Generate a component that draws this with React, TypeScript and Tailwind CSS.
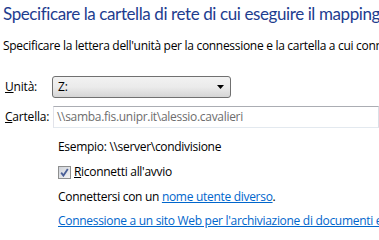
import React from 'react';

const font = { fontFamily: '"Open Sans", "Noto Sans", sans-serif' };

export default function App(): JSX.Element {
  return (
    <div className="h-[240px] w-[379px] overflow-hidden bg-white text-black" style={font}>
      <h1 className="whitespace-nowrap pl-[3px] pt-[3px] font-['Lato',sans-serif] text-[17px] leading-[22px] tracking-[-0.4px] text-[#1e3d8f]">
        Specificare la cartella di rete di cui eseguire il mapping
      </h1>
      <p className="mt-[13px] whitespace-nowrap pl-[3px] text-[12px] leading-[16px] tracking-[-0.3px]">
        Specificare la lettera dell'unità per la connessione e la cartella a cui connettersi:
      </p>

      <div className="mt-[22px] flex items-center">
        <label className="w-[52px] pl-[5px] text-[12px] tracking-[-0.2px]">
          <span className="underline">U</span>nità:
        </label>
        <div className="flex h-[22px] w-[179px] items-center justify-between rounded-[3px] border border-[#707070] bg-gradient-to-b from-[#f2f2f2] via-[#ebebeb] to-[#d5d5d5] pl-[5px] pr-[6px] text-[12px]">
          <span>Z:</span>
          <svg width="7" height="4" viewBox="0 0 7 4">
            <path d="M0 0h7L3.5 4z" fill="#000" />
          </svg>
        </div>
      </div>

      <div className="mt-[8px] flex items-center">
        <label className="w-[53px] pl-[5px] text-[12px] tracking-[-0.2px]">
          <span className="underline">C</span>artella:
        </label>
        <div className="flex h-[22px] flex-1 items-center whitespace-nowrap border border-[#abadb3] border-b-[#e3e9ef] border-l-[#e2e3ea] border-r-[#dbdfe6] pl-[3px] text-[12px] tracking-[-0.3px] text-[#6d6d6d]">
          \\samba.fis.unipr.it\alessio.cavalieri
        </div>
      </div>

      <div className="pl-[58px] text-[12px] tracking-[-0.3px]">
        <p className="mt-[11px] leading-[16px]">Esempio: \\server\condivisione</p>
        <div className="mt-[9px] flex items-center gap-[3px]">
          <span className="flex h-[13px] w-[13px] items-center justify-center border border-[#8e8f8f] bg-gradient-to-br from-[#cfd3da] to-[#f4f4f4]">
            <svg width="9" height="9" viewBox="0 0 9 9">
              <path d="M1.2 4.6l2.2 3L7.8 1" fill="none" stroke="#4a5f97" strokeWidth="1.8" />
            </svg>
          </span>
          <span className="leading-[16px]">
            <span className="underline">R</span>iconnetti all'avvio
          </span>
        </div>
        <p className="mt-[9px] leading-[16px]">
          Connettersi con un <span className="text-[#0066cc] underline">nome utente diverso</span>.
        </p>
        <p className="mt-[8px] whitespace-nowrap leading-[16px] text-[#0066cc] underline">
          Connessione a un sito Web per l'archiviazione di documenti e immagini
        </p>
      </div>
    </div>
  );
}
